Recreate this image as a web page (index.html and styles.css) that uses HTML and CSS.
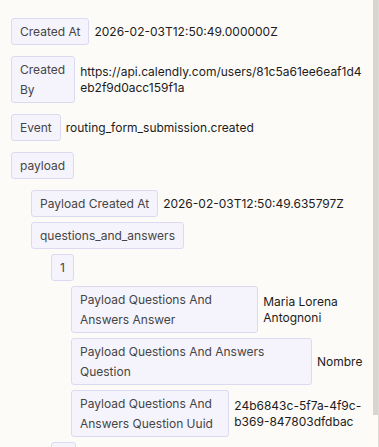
FILE: index.html
```html
<!DOCTYPE html>
<html lang="en">
<head>
    <meta charset="UTF-8">
    <meta name="viewport" content="width=device-width, initial-scale=1.0">
    <title>Webhook Payload</title>
    <link rel="stylesheet" href="styles.css">
</head>
<body>
    <div class="page">
        <div class="tree">
            <div class="field">
                <span class="key">Created At</span>
                <span class="value">2026-02-03T12:50:49.000000Z</span>
            </div>
            <div class="field">
                <span class="key">Created By</span>
                <span class="value">https://api.calendly.com/users/81c5a61ee6eaf1d4eb2f9d0acc159f1a</span>
            </div>
            <div class="field">
                <span class="key">Event</span>
                <span class="value">routing_form_submission.created</span>
            </div>

            <div class="group group-top">
                <div class="field">
                    <span class="key">payload</span>
                </div>
                <div class="children">
                    <div class="field">
                        <span class="key">Payload Created At</span>
                        <span class="value">2026-02-03T12:50:49.635797Z</span>
                    </div>
                    <div class="group">
                        <div class="field">
                            <span class="key">questions_and_answers</span>
                        </div>
                        <div class="children">
                            <div class="group">
                                <div class="field">
                                    <span class="key">1</span>
                                </div>
                                <div class="children">
                                    <div class="field">
                                        <span class="key">Payload Questions And Answers Answer</span>
                                        <span class="value">Maria Lorena Antognoni</span>
                                    </div>
                                    <div class="field">
                                        <span class="key">Payload Questions And Answers Question</span>
                                        <span class="value">Nombre</span>
                                    </div>
                                    <div class="field">
                                        <span class="key">Payload Questions And Answers Question Uuid</span>
                                        <span class="value">24b6843c-5f7a-4f9c-b369-847803dfdbac</span>
                                    </div>
                                </div>
                            </div>
                            <div class="field">
                                <span class="key">2</span>
                            </div>
                        </div>
                    </div>
                </div>
            </div>
        </div>

        <!-- fake scrollbar, headless screenshots hide the real one -->
        <div class="scrollbar">
            <div class="thumb"></div>
        </div>
    </div>
</body>
</html>
```

FILE: styles.css
```css
* {
    margin: 0;
    padding: 0;
    box-sizing: border-box;
}

body {
    font-family: Inter, 'Noto Sans', sans-serif;
    font-size: 12px;
    background: #fcfbf8;
    color: #1c1c1c;
}

.page {
    display: flex;
    height: 100vh;
    overflow: hidden;
}

.tree {
    flex: 1;
    min-width: 0;
    display: flex;
    flex-direction: column;
    gap: 11px;
    padding: 18px 10px 12px 11px;
}

.group {
    display: flex;
    flex-direction: column;
    gap: 5px;
}

.group-top {
    gap: 11px;
}

.children {
    display: flex;
    flex-direction: column;
    gap: 5px;
    padding-left: 20px;
}

.field {
    display: flex;
    align-items: center;
    gap: 5px;
}

.key {
    background: #f5f4fc;
    border: 1px solid #dcdaf1;
    border-radius: 3px;
    padding: 2.5px 8px;
    line-height: 20px;
    color: #454545;
}

.value {
    line-height: 16px;
    min-width: 46px;
    overflow-wrap: anywhere;
}

.scrollbar {
    flex: 0 0 6px;
    display: flex;
    flex-direction: column;
    border-right: 1px solid #dedbd6;
}

.thumb {
    height: 415px;
    background: #d8d5d0;
}
```
